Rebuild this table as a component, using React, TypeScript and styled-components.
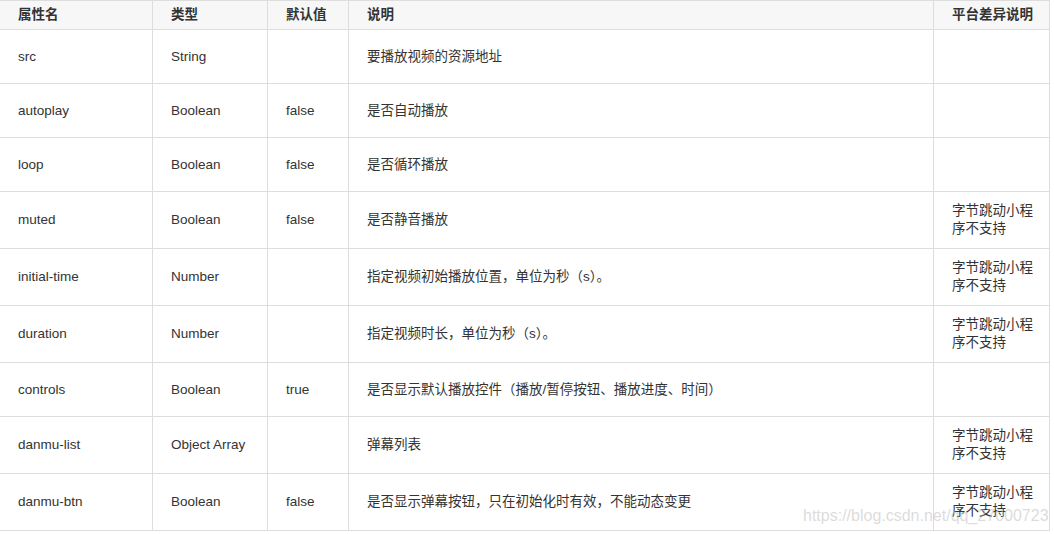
import React from "react";
import styled, { createGlobalStyle } from "styled-components";

const Global = createGlobalStyle`
  html, body { margin: 0; padding: 0; background: #fff; }
  body { font-family: "Liberation Sans", Arial, "Noto Sans CJK SC", sans-serif; }
`;

const Page = styled.div`
  position: relative;
  width: 1054px;
  height: 534px;
  overflow: hidden;
`;

const Grid = styled.div`
  display: grid;
  grid-template-columns: 153px 115px 81px 585px 116px;
  border-top: 1px solid #dddddd;
  width: 1050px;
  font-size: 13.5px;
  line-height: 18px;
  color: #333;
`;

const HeadCell = styled.div<{ $last?: boolean }>`
  box-sizing: border-box;
  background: #f7f7f7;
  font-weight: bold;
  padding: 5px ${(p) => (p.$last ? "10px" : "10px")} 5px 18px;
  border-right: 1px solid #dddddd;
  border-bottom: 1px solid #dddddd;
  white-space: nowrap;
`;

const Cell = styled.div`
  box-sizing: border-box;
  display: flex;
  align-items: center;
  min-height: 54px;
  padding: 10px 10px 10px 18px;
  border-right: 1px solid #dddddd;
  border-bottom: 1px solid #dddddd;
`;

const Watermark = styled.div`
  position: absolute;
  left: 803px;
  top: 506px;
  font-family: "Liberation Sans", Arial, sans-serif;
  font-size: 16px;
  line-height: 20px;
  color: rgba(190, 190, 190, 0.55);
  white-space: nowrap;
  pointer-events: none;
`;

type Row = [string, string, string, string, string];

const headers = ["属性名", "类型", "默认值", "说明", "平台差异说明"];

const NS = "字节跳动小程序不支持";

const rows: Row[] = [
  ["src", "String", "", "要播放视频的资源地址", ""],
  ["autoplay", "Boolean", "false", "是否自动播放", ""],
  ["loop", "Boolean", "false", "是否循环播放", ""],
  ["muted", "Boolean", "false", "是否静音播放", NS],
  ["initial-time", "Number", "", "指定视频初始播放位置，单位为秒（s）。", NS],
  ["duration", "Number", "", "指定视频时长，单位为秒（s）。", NS],
  ["controls", "Boolean", "true", "是否显示默认播放控件（播放/暂停按钮、播放进度、时间）", ""],
  ["danmu-list", "Object Array", "", "弹幕列表", NS],
  ["danmu-btn", "Boolean", "false", "是否显示弹幕按钮，只在初始化时有效，不能动态变更", NS],
];

export default function App() {
  return (
    <Page>
      <Global />
      <Grid>
        {headers.map((h, i) => (
          <HeadCell key={h} $last={i === 4}>
            {h}
          </HeadCell>
        ))}
        {rows.map((r) =>
          r.map((c, i) => <Cell key={r[0] + i}>{c}</Cell>)
        )}
      </Grid>
      <Watermark>https://blog.csdn.net/qq_27000723</Watermark>
    </Page>
  );
}
